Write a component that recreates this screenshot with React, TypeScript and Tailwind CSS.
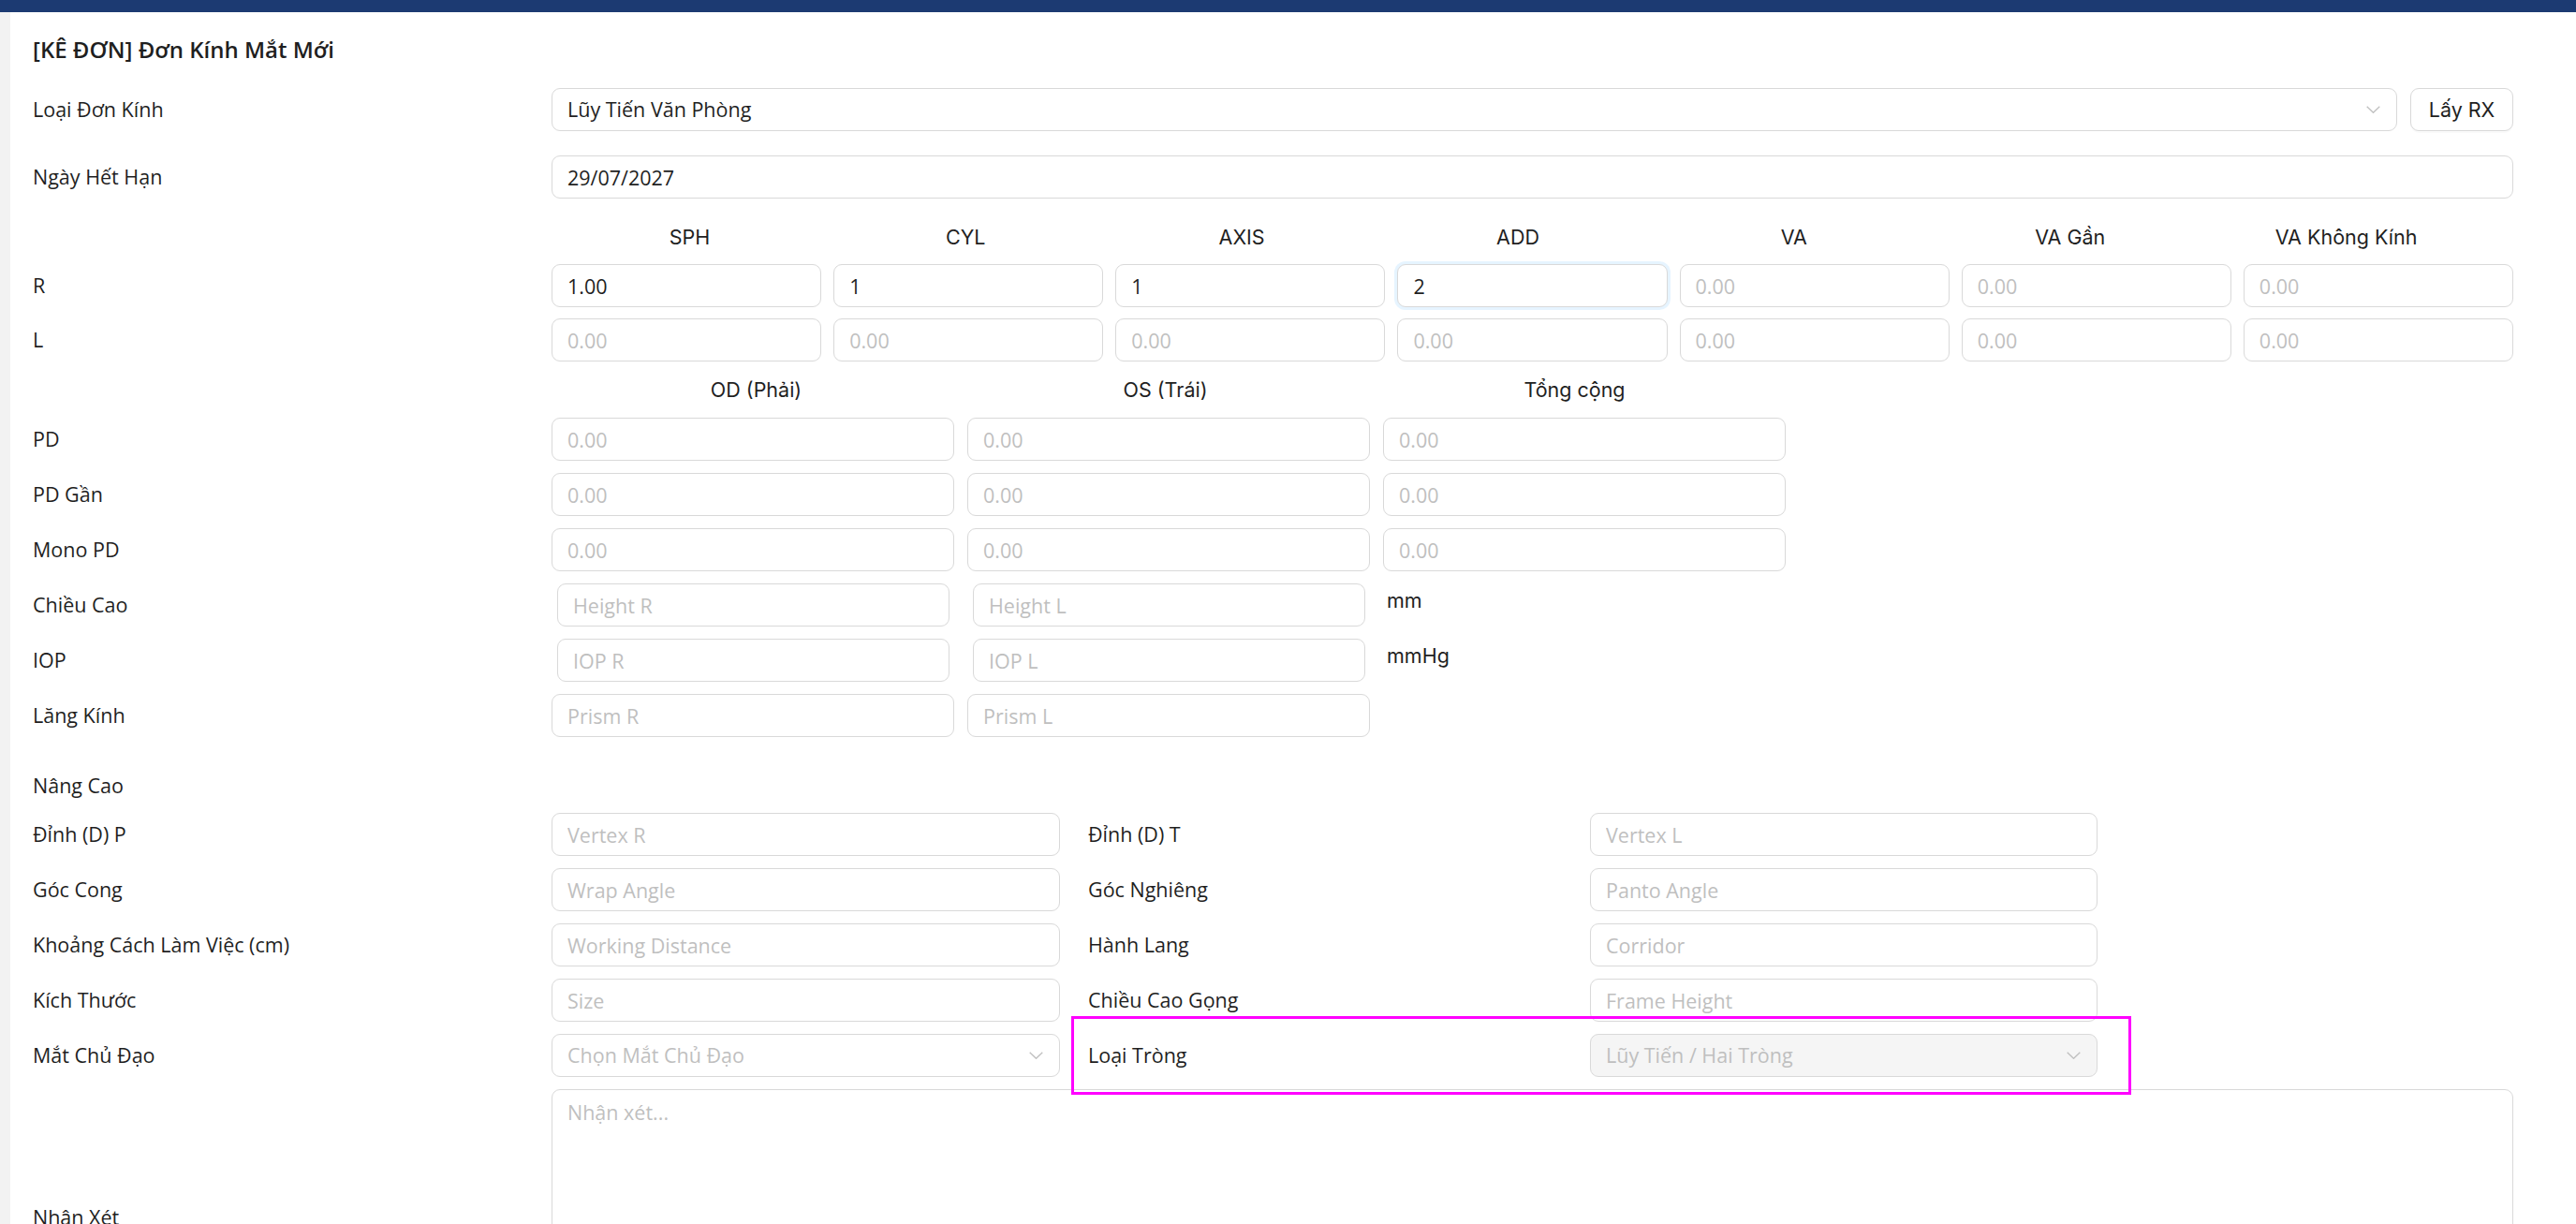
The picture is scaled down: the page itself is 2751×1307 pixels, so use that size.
import React from 'react';

// --- Styles ---
const body = "font-['Open_Sans',sans-serif]";
const sys = "font-['Inter','Liberation_Sans',sans-serif]";
const inputCls = `h-[46px] w-full rounded-[9px] border border-[#d9d9d9] bg-white px-[16px] text-[21.5px] text-[#1f1f1f] outline-none placeholder:text-[#bfbfbf] ${body}`;

const Chevron = () => (
  <svg width="15" height="8" viewBox="0 0 15 8" fill="none" className="shrink-0">
    <polyline points="0.7,0.7 7.5,7.3 14.3,0.7" stroke="#bfbfbf" strokeWidth="1.3" />
  </svg>
);

const Field = ({ value, placeholder, focused }: { value?: string; placeholder?: string; focused?: boolean }) => (
  <input
    readOnly
    value={value ?? ''}
    placeholder={placeholder}
    className={
      focused
        ? `${inputCls} border-[#4096ff] shadow-[0_0_0_3px_rgba(5,145,255,0.1)]`
        : inputCls
    }
  />
);

const Select = ({ value, placeholder, disabled }: { value?: string; placeholder?: string; disabled?: boolean }) => (
  <div
    className={`flex h-[46px] w-full items-center justify-between rounded-[9px] border border-[#d9d9d9] pl-[16px] pr-[17px] text-[21.5px] ${body} ${
      disabled ? 'bg-[#f5f5f5] text-[#bfbfbf]' : 'bg-white'
    }`}
  >
    <span className={value && !disabled ? 'text-[#1f1f1f]' : 'text-[#bfbfbf]'}>{value ?? placeholder}</span>
    <Chevron />
  </div>
);

const Label = ({ children }: { children: React.ReactNode }) => (
  <div className={`w-[554px] shrink-0 text-[21.5px] text-[#1f1f1f] ${body}`}>{children}</div>
);

const Row = ({ label, children, className = '' }: { label: React.ReactNode; children: React.ReactNode; className?: string }) => (
  <div className={`flex items-center ${className}`}>
    <Label>{label}</Label>
    <div className="min-w-0 flex-1">{children}</div>
  </div>
);

const rxCols = ['SPH', 'CYL', 'AXIS', 'ADD', 'VA', 'VA Gần', 'VA Không Kính'];
const rValues = ['1.00', '1', '1', '2', '', '', ''];

const pdRows = ['PD', 'PD Gần', 'Mono PD'];

const advanced = [
  ['Đỉnh (D) P', 'Vertex R', 'Đỉnh (D) T', 'Vertex L'],
  ['Góc Cong', 'Wrap Angle', 'Góc Nghiêng', 'Panto Angle'],
  ['Khoảng Cách Làm Việc (cm)', 'Working Distance', 'Hành Lang', 'Corridor'],
  ['Kích Thước', 'Size', 'Chiều Cao Gọng', 'Frame Height'],
];

const App = () => {
  return (
    <div className="min-h-screen bg-white">
      <div className="h-[13px] bg-[#1c3a72]" />
      <div className="flex">
        <div className="w-[11px] shrink-0 self-stretch bg-[#f2f2f2]" />
        <main className="flex-1 pl-[24px] pr-[67px]">
          <h1 className={`pt-[24px] text-[24px] font-semibold leading-[32px] text-[#1f1f1f] ${body}`}>
            [KÊ ĐƠN] Đơn Kính Mắt Mới
          </h1>

          <Row label="Loại Đơn Kính" className="mt-[25px]">
            <div className="flex gap-[14px]">
              <Select value="Lũy Tiến Văn Phòng" />
              <button
                className={`h-[46px] w-[110px] shrink-0 rounded-[9px] border border-[#d9d9d9] bg-white text-[21.5px] text-[#1f1f1f] shadow-[0_2px_0_rgba(0,0,0,0.02)] ${sys}`}
              >
                Lấy RX
              </button>
            </div>
          </Row>

          <Row label="Ngày Hết Hạn" className="mt-[26px]">
            <Field value="29/07/2027" />
          </Row>

          {/* Prescription grid */}
          <div className="mt-[29px] flex">
            <div className="w-[554px] shrink-0" />
            <div className="grid w-[2064px] grid-cols-7">
              {rxCols.map((c) => (
                <div key={c} className={`text-center text-[21.5px] leading-[24px] text-[#1f1f1f] ${sys}`}>
                  {c}
                </div>
              ))}
            </div>
          </div>
          <Row label="R" className="mt-[17px]">
            <div className="grid grid-cols-7 gap-x-[13px]">
              {rValues.map((v, i) => (
                <Field key={i} value={v} placeholder="0.00" focused={i === 3} />
              ))}
            </div>
          </Row>
          <Row label="L" className="mt-[12px]">
            <div className="grid grid-cols-7 gap-x-[13px]">
              {rxCols.map((c) => (
                <Field key={c} placeholder="0.00" />
              ))}
            </div>
          </Row>

          {/* PD block */}
          <div className="mt-[18px] flex">
            <div className="w-[554px] shrink-0" />
            <div className="grid grid-cols-[437px_437px_437px]">
              {['OD (Phải)', 'OS (Trái)', 'Tổng cộng'].map((c) => (
                <div key={c} className={`text-center text-[21.5px] leading-[24px] text-[#1f1f1f] ${sys}`}>
                  {c}
                </div>
              ))}
            </div>
          </div>
          <div className="mt-[18px] flex flex-col gap-[13px]">
            {pdRows.map((r) => (
              <Row key={r} label={r}>
                <div className="grid grid-cols-[430px_430px_430px] gap-x-[14px]">
                  <Field placeholder="0.00" />
                  <Field placeholder="0.00" />
                  <Field placeholder="0.00" />
                </div>
              </Row>
            ))}
            {[
              ['Chiều Cao', 'Height R', 'Height L', 'mm'],
              ['IOP', 'IOP R', 'IOP L', 'mmHg'],
            ].map(([l, a, b, unit]) => (
              <Row key={l} label={l}>
                <div className="grid grid-cols-[430px_430px_430px] gap-x-[14px]">
                  <div className="pl-[6px] pr-[5px]">
                    <Field placeholder={a} />
                  </div>
                  <div className="pl-[6px] pr-[5px]">
                    <Field placeholder={b} />
                  </div>
                  <div className={`self-start pt-[2px] pl-[4px] text-[21.5px] text-[#1f1f1f] ${sys}`}>{unit}</div>
                </div>
              </Row>
            ))}
            <Row label="Lăng Kính">
              <div className="grid grid-cols-[430px_430px_430px] gap-x-[14px]">
                <Field placeholder="Prism R" />
                <Field placeholder="Prism L" />
              </div>
            </Row>
          </div>

          {/* Advanced */}
          <div className={`mt-[40px] text-[21.5px] leading-[24px] text-[#1f1f1f] ${body}`}>Nâng Cao</div>
          <div className="mt-[17px] flex flex-col gap-[13px]">
            {advanced.map(([l1, p1, l2, p2]) => (
              <div key={l1} className="grid grid-cols-[554px_543px_566px_542px] items-center">
                <Label>{l1}</Label>
                <Field placeholder={p1} />
                <div className={`pl-[30px] text-[21.5px] text-[#1f1f1f] ${body}`}>{l2}</div>
                <Field placeholder={p2} />
              </div>
            ))}
            <div className="grid grid-cols-[554px_543px_566px_542px] items-center">
              <Label>Mắt Chủ Đạo</Label>
              <Select placeholder="Chọn Mắt Chủ Đạo" />
              <div className={`relative pl-[30px] text-[21.5px] text-[#1f1f1f] ${body}`}>
                Loại Tròng
                <div className="pointer-events-none absolute -top-[26px] -bottom-[26px] left-[12px] -right-[578px] border-[3px] border-[#ff00ff]" />
              </div>
              <Select value="Lũy Tiến / Hai Tròng" disabled />
            </div>
            <Row label="Nhận Xét">
              <textarea
                readOnly
                placeholder="Nhận xét..."
                className={`block h-[274px] w-full resize-none rounded-[9px] border border-[#d9d9d9] px-[16px] py-[8px] text-[21.5px] text-[#1f1f1f] outline-none placeholder:text-[#bfbfbf] ${body}`}
              />
            </Row>
          </div>
        </main>
      </div>
    </div>
  );
};

export default App;
